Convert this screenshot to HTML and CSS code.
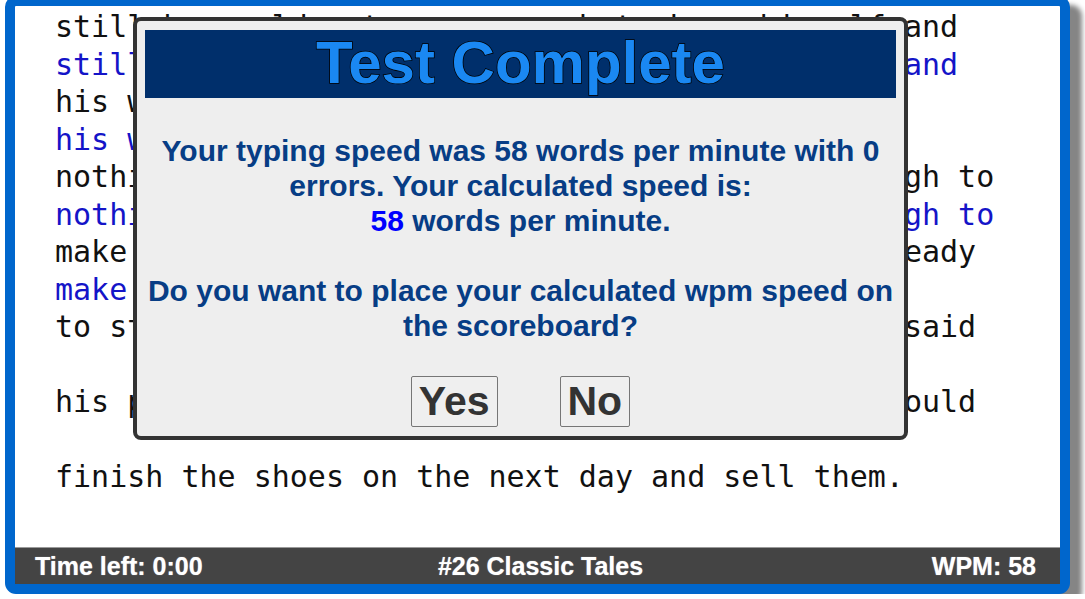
FILE: index.html
```html
<!DOCTYPE html>
<html lang="en">
<head>
  <meta charset="UTF-8" />
  <meta name="viewport" content="width=device-width, initial-scale=1.0" />
  <title>Typing Test</title>
  <link rel="stylesheet" href="styles.css">
</head>
<body>
  <div id="test-frame">
    <div id="story">
      <div class="line">still he could not earn enough to keep himself and</div>
      <div class="line typed">still he could not earn enough to keep himself and</div>
      <div class="line">his wife, and at last the time came when he had</div>
      <div class="line typed">his wife, and at last the time came when he had</div>
      <div class="line">nothing left but one piece of leather just enough to</div>
      <div class="line typed">nothing left but one piece of leather just enough to</div>
      <div class="line">make one pair of shoes. Then he cut them out, ready</div>
      <div class="line typed">make one pair of shoes. Then</div>
      <div class="line">to start on first thing in the morning, and he said</div>
      <div class="line typed"></div>
      <div class="line">his prayers and went to sleep, hoping that he would</div>
      <div class="line typed"></div>
      <div class="line">finish the shoes on the next day and sell them.</div>
    </div>

    <div id="status-bar">
      <span class="status-left">Time left: 0:00</span>
      <span class="status-mid">#26 Classic Tales</span>
      <span class="status-right">WPM: 58</span>
    </div>

    <div id="result-dialog">
      <h2 class="dialog-title">Test Complete</h2>
      <p class="dialog-msg">Your typing speed was 58 words per minute with 0 errors. Your calculated speed is:<br><span class="calc-wpm">58</span> words per minute.</p>
      <p class="dialog-msg">Do you want to place your calculated wpm speed on the scoreboard?</p>
      <div class="dialog-buttons">
        <button id="yes-btn">Yes</button>
        <button id="no-btn">No</button>
      </div>
    </div>
  </div>
</body>
</html>
```

FILE: styles.css
```css
:root {
  --frame-blue: #0066cc;
  --navy: #002f6b;
  --title-blue: #1a88f2;
  --msg-blue: #073d85;
  --typed-blue: #1414c8;
  --bar-grey: #444444;
}

body {
  margin: 0;
  background-color: #ffffff;
  overflow: hidden;
}

#test-frame {
  position: relative;
  display: flex;
  flex-direction: column;
  width: 1045px;
  height: 578px;
  margin: -4px 0 0 5px;
  border: 10px solid var(--frame-blue);
  border-radius: 11px;
  background-color: #ffffff;
  box-shadow: 12px 9px 5px #858585;
}

#story {
  flex: 1;
  padding: 2px 0 0 40px;
  font-family: "DejaVu Sans Mono", monospace;
  font-size: 30px;
  line-height: 37.5px;
  color: #111111;
}

.line {
  height: 37.5px;
  white-space: pre;
}

.line.typed {
  color: var(--typed-blue);
}

#status-bar {
  display: grid;
  grid-template-columns: 1fr auto 1fr;
  align-items: center;
  height: 36px;
  padding: 0 24px 0 20px;
  border-top: 1px solid #9a9a9a;
  background-color: var(--bar-grey);
  color: #ffffff;
  font-family: "Liberation Sans", Arial, sans-serif;
  font-weight: bold;
  font-size: 25px;
  text-shadow: 0 0 1px #bbbbbb;
}

.status-mid {
  padding-left: 10px;
}

.status-right {
  justify-self: end;
}

#result-dialog {
  position: absolute;
  left: 118px;
  top: 11px;
  width: 775px;
  box-sizing: border-box;
  padding: 9px 8px;
  border: 4px solid #333333;
  border-radius: 8px;
  background-color: #eeeeee;
  font-family: "Liberation Sans", Arial, sans-serif;
  font-weight: bold;
  text-align: center;
}

.dialog-title {
  margin: 0;
  height: 68px;
  line-height: 66px;
  background-color: var(--navy);
  color: var(--title-blue);
  font-size: 60px;
  -webkit-text-stroke: 1.5px #000000;
  paint-order: stroke fill;
}

.dialog-msg {
  margin: 35px -8px 0;
  font-size: 30px;
  line-height: 35px;
  color: var(--msg-blue);
}

.calc-wpm {
  color: #0000ff;
}

.dialog-buttons {
  display: flex;
  justify-content: center;
  gap: 62px;
  margin-top: 33px;
}

.dialog-buttons button {
  padding: 1px 7px;
  border: 1px solid #767676;
  border-radius: 2px;
  background-color: #efefef;
  color: #333333;
  font-family: "Liberation Sans", Arial, sans-serif;
  font-weight: bold;
  font-size: 41px;
  line-height: 47px;
}
```
